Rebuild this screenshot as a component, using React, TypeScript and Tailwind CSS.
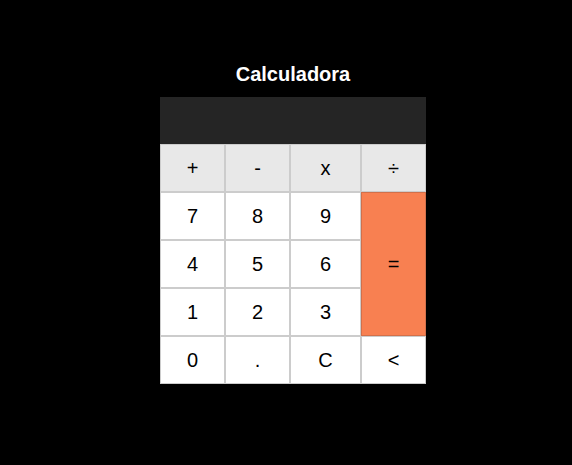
import React from "react";

const cell =
  "flex items-center justify-center border border-[#cccccc] text-[20px] leading-none text-black";

export default function App() {
  const ops = ["+", "-", "x", "÷"];
  return (
    <div
      className="min-h-screen w-full bg-black flex flex-col items-center pt-[62px] pl-[14px]"
      style={{ fontFamily: '"Liberation Sans", Arial, sans-serif' }}
    >
      <h1 className="text-[20px] leading-6 font-bold text-white">Calculadora</h1>
      <div className="mt-[11px] w-[266px]">
        <div className="h-[47px] bg-[#252525]" />
        <div className="grid grid-cols-[65px_65px_71px_65px] grid-rows-[48px_48px_48px_48px_48px]">
          {ops.map((o) => (
            <div key={o} className={`${cell} bg-[#e8e8e8]`}>
              {o}
            </div>
          ))}
          <div className={`${cell} bg-white`}>7</div>
          <div className={`${cell} bg-white`}>8</div>
          <div className={`${cell} bg-white`}>9</div>
          <div className="row-span-3 flex items-center justify-center border border-[#d2704a] bg-[#f88051] text-[20px] leading-none text-black">
            =
          </div>
          <div className={`${cell} bg-white`}>4</div>
          <div className={`${cell} bg-white`}>5</div>
          <div className={`${cell} bg-white`}>6</div>
          <div className={`${cell} bg-white`}>1</div>
          <div className={`${cell} bg-white`}>2</div>
          <div className={`${cell} bg-white`}>3</div>
          <div className={`${cell} bg-white`}>0</div>
          <div className={`${cell} bg-white`}>.</div>
          <div className={`${cell} bg-white`}>C</div>
          <div className={`${cell} bg-white`}>&lt;</div>
        </div>
      </div>
    </div>
  );
}
